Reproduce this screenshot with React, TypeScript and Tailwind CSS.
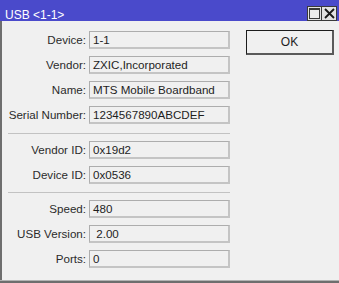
import React from 'react';

type Row = { label: string; value: string };

const sections: Row[][] = [
  [
    { label: 'Device:', value: '1-1' },
    { label: 'Vendor:', value: 'ZXIC,Incorporated' },
    { label: 'Name:', value: 'MTS Mobile Boardband' },
    { label: 'Serial Number:', value: '1234567890ABCDEF' },
  ],
  [
    { label: 'Vendor ID:', value: '0x19d2' },
    { label: 'Device ID:', value: '0x0536' },
  ],
  [
    { label: 'Speed:', value: '480' },
    { label: 'USB Version:', value: '\u00a02.00' },
    { label: 'Ports:', value: '0' },
  ],
];

const Field: React.FC<Row> = ({ label, value }) => (
  <div className="flex items-center h-[18px]">
    <div className="w-[84px] text-right text-[#2b2b2b] whitespace-nowrap">{label}</div>
    <div className="ml-[3px] w-[141px] h-[18px] flex items-center pl-[3px] border border-[#adadad] border-r-2 border-b-2 border-r-[#c4c4c4] border-b-[#c4c4c4] bg-[#f0f0f0] text-[#1e1e1e] whitespace-nowrap">
      {value}
    </div>
  </div>
);

const App: React.FC = () => {
  return (
    <div className="w-[339px] h-[283px] bg-[#f0f0f0] flex flex-col font-['Liberation_Sans',Arial,sans-serif] text-[11.6px] leading-[14px] overflow-hidden">
      <div className="h-[21px] bg-[#4a4acb] flex items-start justify-between">
        <span className="pl-[5px] pt-[8px] text-white text-[12px]">USB &lt;1-1&gt;</span>
        <div className="flex mt-[6px] mr-[2px]">
          <div className="w-[15px] h-[15px] bg-[#e3e3e3] border border-[#3a3a3a] flex items-center justify-center">
            <div className="w-[11px] h-[11px] border border-[#3a3a3a] border-t-2 bg-[#ececec]" />
          </div>
          <div className="w-[15px] h-[15px] bg-[#e3e3e3] border border-l-0 border-[#3a3a3a] flex items-center justify-center">
            <svg width="11" height="11" viewBox="0 0 11 11">
              <path d="M1 1 L10 10 M10 1 L1 10" stroke="#1a1a1a" strokeWidth="1.8" />
            </svg>
          </div>
        </div>
      </div>
      <div className="flex-1 flex border-l-2 border-[#6e6e6e]">
        <div className="w-[229px] flex flex-col pt-[10px]">
          <div className="flex flex-col gap-[7px]">
            {sections[0].map(r => (
              <Field key={r.label} {...r} />
            ))}
          </div>
          <div className="mt-[9px] ml-[6px] w-[222px] h-[1px] bg-[#c2c2c2]" />
          <div className="mt-[7px] flex flex-col gap-[7px]">
            {sections[1].map(r => (
              <Field key={r.label} {...r} />
            ))}
          </div>
          <div className="mt-[8px] ml-[6px] w-[222px] h-[1px] bg-[#c2c2c2]" />
          <div className="mt-[7px] flex flex-col gap-[7px]">
            {sections[2].map(r => (
              <Field key={r.label} {...r} />
            ))}
          </div>
        </div>
        <div className="pl-[15px] pt-[9px]">
          <button className="w-[88px] h-[25px] bg-[#f0f0f0] border border-[#1c1c1c] border-r-2 border-b-2 border-r-[#5a5a5a] border-b-[#5a5a5a] text-[12px] text-[#1e1e1e] flex items-center justify-center">
            OK
          </button>
        </div>
      </div>
      <div className="h-[1px] bg-[#b3b3b3]" />
      <div className="h-[2px] bg-[#6e6e6e]" />
    </div>
  );
};

export default App;
